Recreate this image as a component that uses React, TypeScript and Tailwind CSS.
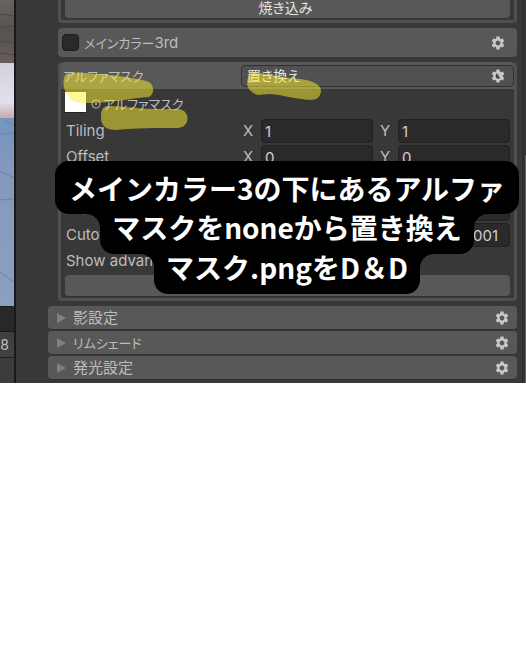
import { MdSettings } from "react-icons/md";

const GROUPS = [
  { name: "影設定", size: "text-[15px]" },
  { name: "リムシェード", size: "text-[13px]" },
  { name: "発光設定", size: "text-[15px]" },
];

export default function App() {
  return (
    <div className="min-h-screen bg-white">
      <main className="relative flex overflow-hidden bg-[#383838] font-['Inter','Noto_Sans_CJK_JP',sans-serif] text-[15px] leading-5 text-[#bdbdbd] [font-feature-settings:'palt']">
        <SceneStrip />
        <div className="min-w-0 flex-1 pr-[5px] pb-[3px]">
          <div className="ml-[42px] flex flex-col gap-[5px]">
            <div className="rounded-b border-3 border-t-0 border-[#505050] px-1 pb-0.5">
              <button className="block h-[18px] w-full rounded-b bg-[#585858] pr-1 pb-1 text-center text-[14px] leading-4 text-[#e4e4e4]">
                焼き込み
              </button>
            </div>

            <div className="flex h-[29px] items-center rounded bg-[#585858] px-1">
              <label className="flex flex-1 items-center gap-[5px]">
                <input
                  type="checkbox"
                  className="size-[17px] appearance-none rounded-sm border border-[#1c1c1c] bg-[#2a2a2a]"
                />
                <span>
                  <span className="text-[13px]">メインカラー</span>3rd
                </span>
              </label>
              <GearButton label="メインカラー3rd" />
              <span className="w-[7px]" />
            </div>

            <AlphaMaskPanel />
          </div>

          <div className="mt-[5px] ml-8 flex flex-col gap-px">
            {GROUPS.map((group) => (
              <div
                key={group.name}
                className="flex h-6 items-center rounded border-b border-[#303030] bg-[#585858] pr-[7px] pl-[9px]"
              >
                <button className={`flex flex-1 items-center gap-[7px] text-left ${group.size}`}>
                  <svg viewBox="0 0 9 10" className="h-[10px] w-[9px] fill-[#808080]">
                    <path d="M0 0 9 5 0 10Z" />
                  </svg>
                  {group.name}
                </button>
                <GearButton label={group.name} />
              </div>
            ))}
          </div>
        </div>
        <div className="w-1 border-l border-[#2c2c2c] bg-[#323232] pt-[155px] pl-0.5">
          <div className="h-full rounded-tl bg-[#626262]" />
        </div>

        <Highlights />
        <Caption />
      </main>
    </div>
  );
}

function SceneStrip() {
  return (
    <div className="flex w-4 shrink-0 flex-col border-r-2 border-[#191919]">
      <svg viewBox="0 0 14 306" className="block h-[306px] w-[14px]">
        <defs>
          <linearGradient id="wall" x1="0" y1="0" x2="0" y2="1">
            <stop offset="0" stopColor="#686361" />
            <stop offset="0.5" stopColor="#57514f" />
            <stop offset="1" stopColor="#675f5b" />
          </linearGradient>
          <linearGradient id="cloth" x1="0" y1="0" x2="0" y2="1">
            <stop offset="0" stopColor="#d3d0dc" />
            <stop offset="0.7" stopColor="#e2e0ec" />
            <stop offset="1" stopColor="#c4a8a8" />
          </linearGradient>
          <linearGradient id="floor" x1="0" y1="0" x2="0" y2="1">
            <stop offset="0" stopColor="#7395c3" />
            <stop offset="0.3" stopColor="#8599bd" />
            <stop offset="1" stopColor="#8d9fc0" />
          </linearGradient>
        </defs>
        <rect width="14" height="63" fill="url(#wall)" />
        <path d="M0 14l14 2M0 27l14-1M0 41l14 2M0 53l14 2" stroke="#4e4846" />
        <rect y="63" width="14" height="56" fill="url(#cloth)" />
        <rect y="118" width="14" height="188" fill="url(#floor)" />
        <path
          d="M5 121l9 4M0 134l14-1M0 171l14 7M0 200l14-1M0 272l14 10"
          fill="none"
          stroke="#71829f"
        />
      </svg>
      <div className="h-[26px] rounded-tr border-y border-[#191919] bg-[#282828]" />
      <div className="flex h-[26px] items-center justify-end border-b border-[#202020] bg-[#404040] pr-[5px] text-[14px]">
        8
      </div>
      <div className="flex-1 bg-[#3c3c3c]" />
    </div>
  );
}

function AlphaMaskPanel() {
  return (
    <section className="rounded border-3 border-t-0 border-[#505050]">
      <div className="flex h-[27px] items-center rounded-t bg-[#585858] pl-0.5">
        <label htmlFor="mask-mode" className="w-[178px] shrink-0 text-[13px]">
          アルファマスク
        </label>
        <div className="relative min-w-0 flex-1">
          <select
            id="mask-mode"
            className="block h-[22px] w-full appearance-none rounded border border-[#303030] bg-[#515151] pl-[5px] text-[14px] leading-5 text-[#e4e4e4]"
          >
            <option>置き換え</option>
          </select>
          <div className="pointer-events-none absolute inset-y-0 right-2 flex items-center">
            <MdSettings size={16} color="#c8c8c8" />
            {/* dropdown arrow sits on top of the gear */}
            <svg viewBox="0 0 16 16" className="absolute size-4">
              <path d="M7 5h7.500L10 10Z" fill="#c8c8c8" />
              <path d="M6 5v5l4 1Z" fill="#484848" />
            </svg>
          </div>
        </div>
      </div>

      <div className="px-1 pt-[3px] pb-px">
        <div className="flex h-[27px] items-start">
          <button
            aria-label="アルファマスク"
            className="size-[21px] border-b border-[#222222] bg-white"
          />
          <svg viewBox="0 0 10 10" className="mt-[7px] ml-[5px] size-[10px]">
            <circle cx="5" cy="5" r="4" fill="none" stroke="#a8a8a8" strokeWidth="1.2" />
            <circle cx="5" cy="5" r="1" fill="#c4c4c4" />
          </svg>
          <span className="mt-0.5 ml-0.5 text-[13px]">アルファマスク</span>
        </div>
        <div className="flex flex-col gap-0.5">
          <VectorRow label="Tiling" value="1" />
          <VectorRow label="Offset" value="0" />
          <div className="h-6" />
          <SliderRow label="Transparency" value="0" />
          <SliderRow label="Cutoff" value="0.001" />
          <div className="flex h-6 items-center pl-px">Show advanced editor</div>
          <button
            aria-label="Show advanced editor"
            className="h-[22px] w-full rounded border-b border-[#303030] bg-[#585858]"
          />
        </div>
      </div>
    </section>
  );
}

function VectorRow({ label, value }: { label: string; value: string }) {
  return (
    <div className="flex h-6 items-center">
      <span className="w-[178px] shrink-0 pl-px">{label}</span>
      <div className="flex min-w-0 flex-1 gap-[7px]">
        {["X", "Y"].map((axis) => (
          <label key={axis} className="flex min-w-0 flex-1 items-center">
            <span className="w-[18px] shrink-0">{axis}</span>
            <NumberField label={`${label} ${axis}`} value={value} />
          </label>
        ))}
      </div>
    </div>
  );
}

function SliderRow({ label, value }: { label: string; value: string }) {
  return (
    <label className="flex h-6 items-center">
      <span className="w-[178px] shrink-0 pl-px">{label}</span>
      <input type="range" aria-label={label} className="mr-2 h-1 min-w-0 flex-1 accent-[#999999]" />
      <span className="w-[54px] shrink-0">
        <NumberField label={`${label} value`} value={value} />
      </span>
    </label>
  );
}

function NumberField({ label, value }: { label: string; value: string }) {
  return (
    <input
      aria-label={label}
      defaultValue={value}
      className="block h-6 w-full min-w-0 rounded border border-[#202020] bg-[#2a2a2a] px-[3px] text-[#d0d0d0]"
    />
  );
}

function GearButton({ label }: { label: string }) {
  return (
    <button aria-label={`${label} settings`}>
      <MdSettings size={16} color="#c8c8c8" />
    </button>
  );
}

// Marker strokes painted over the inspector
function Highlights() {
  return (
    <svg
      viewBox="0 0 340 140"
      className="pointer-events-none absolute top-0 left-0 h-[140px] w-[340px] fill-[#fff232] opacity-50"
    >
      <path d="M66 74C76 71 95 74 111 75C126 77 142 79 149 82C155 86 154 95 149 97C132 98 112 103 91 103C76 103 71 102 68 95C63 91 62 79 66 74Z" />
      <path d="M108 106C125 106 141 110 177 109C191 109 191 127 178 128C155 128 138 128 116 130C104 130 101 124 101 117C101 110 103 106 108 106Z" />
      <path d="M250 72C266 73 281 78 299 79C311 80 321 84 321 91C320 100 313 101 302 99C290 98 279 94 269 94C263 94 258 96 255 94C245 88 246 82 250 72Z" />
    </svg>
  );
}

function Caption() {
  return (
    <div className="absolute inset-x-0 top-[161px] flex flex-col items-center pl-12 font-['Noto_Sans_CJK_JP',sans-serif] text-[28px] font-bold whitespace-nowrap text-white [font-feature-settings:normal]">
      <p className="rounded-[14px] bg-black px-[14px] pt-[7px] pb-1.5 leading-10">
        メインカラー3の下にあるアルファ
      </p>
      <CaptionLine>マスクをnoneから置き換え</CaptionLine>
      <CaptionLine>マスク.pngをD＆D</CaptionLine>
    </div>
  );
}

function CaptionLine({ children }: { children: React.ReactNode }) {
  return (
    <p className="relative rounded-b-[14px] bg-black px-3 pb-3.5 leading-[26px]">
      <Fillet className="right-full" />
      {children}
      <Fillet className="left-full -scale-x-100" />
    </p>
  );
}

// Inner corner where a narrower caption line meets the one above it
function Fillet({ className }: { className: string }) {
  return (
    <svg viewBox="0 0 14 14" className={`absolute top-0 size-[14px] ${className}`}>
      <path d="M0 0H14V14A14 14 0 0 0 0 0Z" />
    </svg>
  );
}
